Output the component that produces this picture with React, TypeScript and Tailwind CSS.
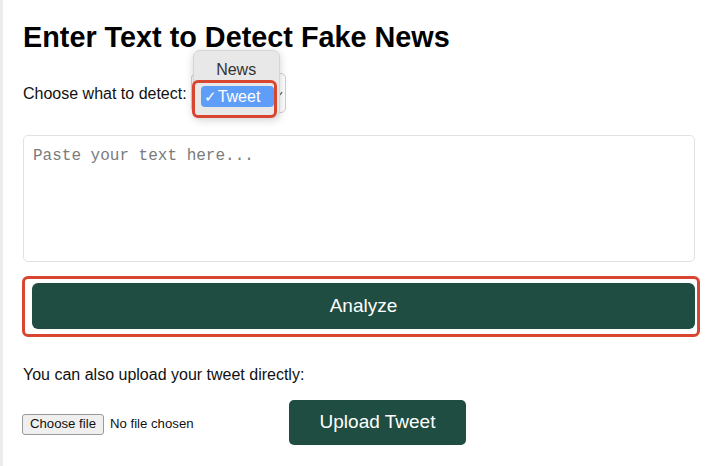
export default function App() {
  return (
    <div className="flex min-h-screen bg-white text-black font-['Liberation_Sans',Arial,sans-serif]">
      <div className="w-[3px] shrink-0 bg-[#ececec]" />

      <main className="flex-1 pl-[20px] pr-[13px]">
        <h1 className="pt-[21px] text-[28.8px] font-bold leading-[32px]">
          Enter Text to Detect Fake News
        </h1>

        <div className="mt-[20px] flex items-center">
          <label className="pt-[2px] text-[16px] leading-[18px] text-[#111]">Choose what to detect:</label>

          <div className="relative ml-[4px] h-[40px] w-[95px]">
            <div className="flex h-full w-full items-center justify-end rounded-[5px] border border-[#cfcfcf] bg-white pr-[2px]">
              <svg width="6" height="5" viewBox="0 0 6 5" className="text-[#555]">
                <path d="M0.8 1.2 L3 3.6 L5.2 1.2" fill="none" stroke="currentColor" strokeWidth="1.1" />
              </svg>
            </div>

            {/* open dropdown */}
            <div className="absolute left-[2px] top-[-23px] h-[68px] w-[87px] rounded-[7px] border border-[#d6d6d6] bg-[#e8e8e8] shadow-[0_2px_8px_rgba(0,0,0,0.18)]">
              <div className="mt-[9px] text-center text-[16px] leading-[20px] text-[#333]">News</div>
              <div className="absolute left-[7px] top-[35px] flex h-[21px] w-[73px] items-center rounded-[4px] bg-[#5f9ef8] pl-[3px] text-[16px] leading-[20px] text-white">
                <span className="w-[14px] text-[15px]">✓</span>
                <span>Tweet</span>
              </div>
              <div className="absolute left-[-2px] top-[29px] h-[38px] w-[85px] rounded-[6px] border-[3px] border-[#d84631]" />
            </div>
          </div>
        </div>

        <textarea
          placeholder="Paste your text here..."
          className="mt-[22px] block h-[127px] w-full resize-none rounded-[5px] border border-[#e2e2e2] bg-white px-[9px] pt-[10px] font-['Liberation_Mono',monospace] text-[16px] leading-[20px] placeholder:text-[#7b7b7b] focus:outline-none"
        />

        <div className="-ml-[1px] -mr-[5px] mt-[14px] rounded-[6px] border-[3px] border-[#d84631] pb-[5px] pl-[7px] pr-[2px] pt-[4px]">
          <button className="flex h-[46px] w-full items-center justify-center rounded-[6px] bg-[#1f4d41] text-[19px] text-white">
            Analyze
          </button>
        </div>

        <p className="mt-[29px] text-[16px] leading-[18px] text-[#111]">You can also upload your tweet directly:</p>

        <div className="mt-[16px] flex items-center">
          <div className="-ml-[1px] flex w-[267px] items-center pt-[3px] text-[13.2px] text-[#111]">
            <span className="flex h-[21px] items-center rounded-[3px] border border-[#9a9a9a] bg-[#efefef] px-[7px]">
              Choose file
            </span>
            <span className="ml-[6px]">No file chosen</span>
          </div>
          <button className="flex h-[45px] w-[177px] items-center justify-center rounded-[5px] bg-[#1f4d41] text-[19px] text-white">
            Upload Tweet
          </button>
        </div>
      </main>
    </div>
  );
}
